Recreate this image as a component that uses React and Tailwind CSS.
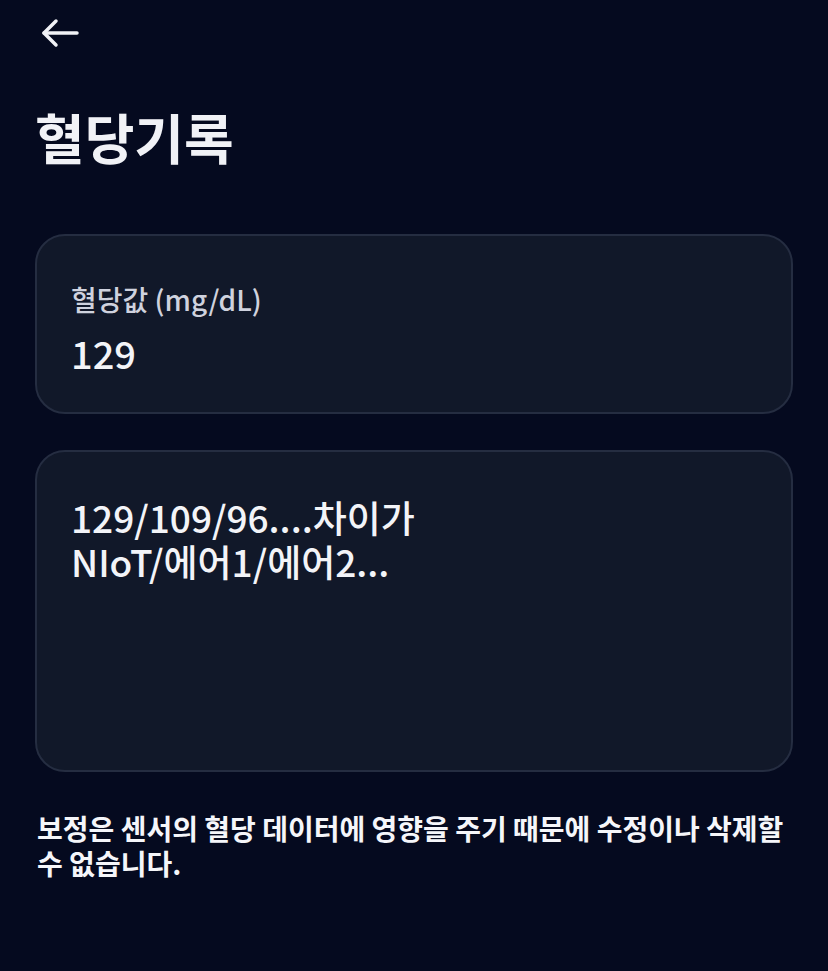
export default function App() {
  const font = { fontFamily: '"Noto Sans CJK KR", "Noto Sans", sans-serif' };
  return (
    <div
      className="min-h-[971px] w-full bg-[#050a1f] px-[35px] pt-[17px] text-white"
      style={font}
    >
      <div className="h-[49px]">
        <svg
          width="40"
          height="32"
          viewBox="0 0 40 32"
          className="ml-[5px] block"
          fill="none"
          stroke="#f1f2f6"
          strokeWidth="3.5"
          strokeLinecap="round"
          strokeLinejoin="round"
        >
          <path d="M4 16H37" />
          <path d="M16 4L4 16L16 28" />
        </svg>
      </div>

      <h1 className="mt-[40px] text-[54px] font-bold leading-[62px] text-[#f1f2f6]">
        혈당기록
      </h1>

      <div className="mt-[66px] flex h-[180px] flex-col rounded-[30px] border-2 border-[#252d41] bg-[#111829] px-[34px] pt-[44px]">
        <div className="text-[28px] font-medium leading-[38px] text-[#cfd2de]">
          혈당값 (mg/dL)
        </div>
        <div className="mt-[12px] text-[38px] font-medium leading-[46px] text-[#f3f4f8]">
          129
        </div>
      </div>

      <div className="mt-[36px] h-[322px] rounded-[30px] border-2 border-[#252d41] bg-[#111829] px-[34px] pt-[43px]">
        <div className="text-[37px] font-medium leading-[44px] text-[#f3f4f8]">
          <div>129/109/96....차이가</div>
          <div>NIoT/에어1/에어2...</div>
        </div>
      </div>

      <p className="mt-[39px] break-keep pl-[2px] text-[28px] font-semibold leading-[35px] text-[#f5f6fa]">
        보정은 센서의 혈당 데이터에 영향을 주기 때문에 수정이나 삭제할 수 없습니다.
      </p>
    </div>
  );
}
